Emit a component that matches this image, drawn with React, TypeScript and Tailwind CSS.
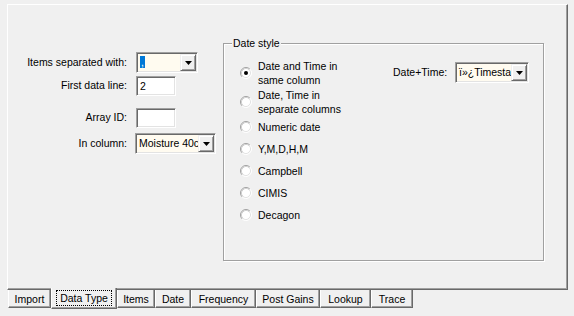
import React from 'react';

const sunken = "border border-t-[#a0a0a0] border-l-[#a0a0a0] border-r-white border-b-white shadow-[inset_1px_1px_0_#696969,inset_-1px_-1px_0_#e3e3e3]";

const DropButton = () => (
    <div className="w-[16px] h-full flex items-center justify-center bg-[#f0f0f0] border border-t-[#f0f0f0] border-l-[#f0f0f0] border-r-[#696969] border-b-[#696969] shadow-[inset_1px_1px_0_#fff,inset_-1px_-1px_0_#a0a0a0]" >
        <svg width="7" height="4" viewBox="0 0 7 4" >
            <path d="M0 0h7L3.5 4z" fill="#000" />
        </svg >
    </div >
);

interface ComboProps {
    width: string
    children: React.ReactNode
}

const Combo = ({width, children}: ComboProps) => (
    <div className={`${width} h-[21px] flex bg-[#fffbf0] p-[1px] ${sunken}`} >
        <div className="flex-1 min-w-0 overflow-hidden whitespace-nowrap pl-[2px] leading-[17px]" >
            {children}
        </div >
        <DropButton />
    </div >
);

const TextBox = ({value}: {value?: string}) => (
    <div className={`w-[40px] h-[20px] bg-white pl-[3px] leading-[18px] ${sunken}`} >
        {value}
    </div >
);

const Radio = ({checked}: {checked?: boolean}) => (
    <svg width="12" height="12" viewBox="0 0 12 12" className="shrink-0" >
        <circle cx="6" cy="6" r="5" fill="#fff" />
        <path d="M2.11 9.89A5.5 5.5 0 0 1 9.89 2.11" stroke="#a0a0a0" fill="none" />
        <path d="M9.89 2.11A5.5 5.5 0 0 1 2.11 9.89" stroke="#fff" fill="none" />
        <path d="M2.82 9.18A4.5 4.5 0 0 1 9.18 2.82" stroke="#d0d0d0" fill="none" />
        <path d="M9.18 2.82A4.5 4.5 0 0 1 2.82 9.18" stroke="#e3e3e3" fill="none" />
        {checked && <circle cx="6" cy="6" r="2" fill="#000" />}
    </svg >
);

interface RadioRowProps {
    checked?: boolean
    tall?: boolean
    children: React.ReactNode
}

const RadioRow = ({checked, tall, children}: RadioRowProps) => (
    <div className={`flex items-center gap-[6px] ${tall ? 'h-[29px]' : 'h-[22px]'}`} >
        <Radio checked={checked} />
        <div className="leading-[14px]" >{children}</div >
    </div >
);

interface FieldRowProps {
    label: string
    gap: string
    className?: string
    children: React.ReactNode
}

const FieldRow = ({label, gap, className, children}: FieldRowProps) => (
    <div className={`flex items-center ${className ?? ''}`} >
        <div className="w-[119px] text-right whitespace-nowrap" >{label}</div >
        <div className={gap} >{children}</div >
    </div >
);

const tabs = [
    {label: 'Import', w: 'w-[43px]'},
    {label: 'Data Type', w: 'w-[66px]', active: true},
    {label: 'Items', w: 'w-[38px]'},
    {label: 'Date', w: 'w-[36px]'},
    {label: 'Frequency', w: 'w-[65px]'},
    {label: 'Post Gains', w: 'w-[64px]'},
    {label: 'Lookup', w: 'w-[51px]'},
    {label: 'Trace', w: 'w-[42px]'},
];

export default function App() {
    return (
        <div className="w-[574px] h-[316px] bg-[#f0f0f0] pt-[4px] pl-[7px] font-['Liberation_Sans',Arial,sans-serif] text-[10.5px] text-black overflow-hidden" >
            <div className="w-[561px] h-[286px] flex border-l border-t border-white border-r border-b border-r-[#696969] border-b-[#696969] shadow-[inset_-1px_-1px_0_#a0a0a0]" >
                <div className="w-[215px] shrink-0 pt-[47px] flex flex-col" >
                    <FieldRow label="Items separated with:" gap="ml-[9px]" >
                        <Combo width="w-[62px]" >
                            <span className="bg-[#0078d7] text-white px-[1px]" >,</span >
                        </Combo >
                    </FieldRow >
                    <FieldRow label="First data line:" gap="ml-[9px]" className="mt-[3px]" >
                        <TextBox value="2" />
                    </FieldRow >
                    <FieldRow label="Array ID:" gap="ml-[9px]" className="mt-[12px]" >
                        <TextBox />
                    </FieldRow >
                    <FieldRow label="In column:" gap="ml-[8px]" className="mt-[5px]" >
                        <Combo width="w-[81px]" >Moisture 40cm</Combo >
                    </FieldRow >
                </div >

                <div className="relative mt-[38px] w-[321px] h-[218px] border border-[#a0a0a0] shadow-[inset_1px_1px_0_#fff,1px_1px_0_#fff] flex" >
                    <div className="absolute -top-[8px] left-[8px] bg-[#f0f0f0] px-[1px] leading-[14px]" >
                        Date style
                    </div >
                    <div className="w-[169px] shrink-0 pl-[16px] pt-[14px] flex flex-col" >
                        <RadioRow checked tall >Date and Time in<br />same column</RadioRow >
                        <RadioRow tall >Date, Time in<br />separate columns</RadioRow >
                        <RadioRow >Numeric date</RadioRow >
                        <RadioRow >Y,M,D,H,M</RadioRow >
                        <RadioRow >Campbell</RadioRow >
                        <RadioRow >CIMIS</RadioRow >
                        <RadioRow >Decagon</RadioRow >
                    </div >
                    <div className="pt-[18px] flex items-start" >
                        <div className="flex items-center gap-[7px]" >
                            <span className="w-[55px] whitespace-nowrap" >Date+Time:</span >
                            <Combo width="w-[74px]" >ï»¿Timestamp</Combo >
                        </div >
                    </div >
                </div >
            </div >

            <div className="flex items-start ml-[1px]" >
                {tabs.map((t) => (
                    <div
                        key={t.label}
                        className={`${t.w} flex items-center justify-center whitespace-nowrap bg-[#f0f0f0] border-l border-white border-r border-b border-r-[#696969] border-b-[#696969] shadow-[inset_-1px_-1px_0_#a0a0a0] ${t.active ? 'relative -mt-[2px] h-[21px]' : 'h-[18px]'}`} >
                        {t.active ? (
                            <span className="border border-dotted border-black px-[3px] leading-[14px]" >{t.label}</span >
                        ) : (
                            <span className="leading-[14px]" >{t.label}</span >
                        )}
                    </div >
                ))}
            </div >
        </div >
    );
}
